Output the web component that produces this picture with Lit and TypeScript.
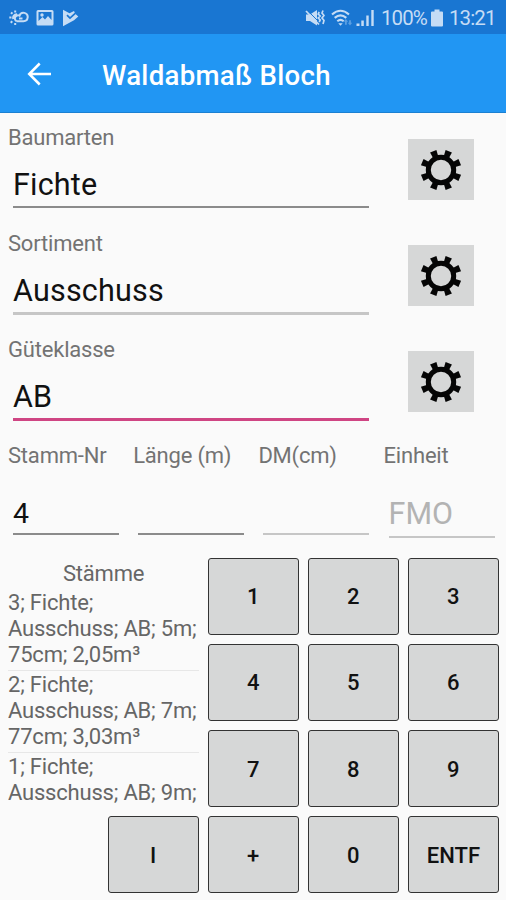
import { LitElement, html, css, svg } from "lit";
import { customElement, property } from "lit/decorators.js";
import { classMap } from "lit/directives/class-map.js";

const gearTeeth = [22.5, 67.5, 112.5, 157.5, 202.5, 247.5, 292.5, 337.5];

@customElement("status-bar")
class StatusBar extends LitElement {
  static styles = css`
    :host {
      display: flex;
      align-items: center;
      height: 34px;
      box-sizing: border-box;
      padding: 1px 10px 0 9px;
      background: #1976d2;
      color: #c5dcf5;
      font-size: 20.5px;
      line-height: 34px;
    }
    svg { display: block; flex: none; }
    .left { display: flex; align-items: center; gap: 7px; flex: 1; }
    .right { display: flex; align-items: center; }
    .wifi { margin-left: 6px; }
    .signal { margin-left: 3px; }
    .percent { margin-left: 6px; width: 45px; letter-spacing: -0.9px; white-space: nowrap; }
    .battery { margin-left: 5px; }
    .time { margin-left: 6px; width: 47px; letter-spacing: -0.9px; white-space: nowrap; }
  `;

  render() {
    return html`
      <div class="left">
        <svg width="20" height="18" viewBox="0 0 20 18" fill="none" stroke="#c5dcf5" stroke-width="2">
          <path d="M7.500 12.200H14.500a4.200 4.200 0 1 0-4-5.500A3 3 0 0 0 7.500 12.200M10 9.500h3.500M8 5.400A3.500 3.500 0 0 0 4.300 10" />
          <path d="M6.200 1.400v2M2 3.400l1.500 1.400M.3 8.500h2.200M1.700 13.700l1.600-1.500M6.200 16v-2" />
        </svg>
        <svg width="18" height="18" viewBox="0 0 18 18">
          <path fill="#c5dcf5" fill-rule="evenodd" d="M2 1h14a1.500 1.500 0 0 1 1.500 1.500V15a1.500 1.500 0 0 1-1.500 1.500H2A1.500 1.500 0 0 1 .5 15V2.500A1.500 1.500 0 0 1 2 1ZM2.500 3v9l4-4 2.500 2.500 3-3.500 3.500 4V3Z" />
          <circle cx="6" cy="6" r="1.700" fill="#c5dcf5" />
        </svg>
        <svg width="18" height="18" viewBox="0 0 18 18">
          <path fill="#c5dcf5" d="M2 .7 8.500 4.200 13 2 14.500 5 17.300 7.500 13 11.200 2 17.300Z" />
          <path d="m6 6.200 3 3 5.500-5" fill="none" stroke="#1976d2" stroke-width="1.700" />
        </svg>
      </div>
      <div class="right">
        <svg width="20" height="18" viewBox="0 0 20 18">
          <path fill="#c5dcf5" d="M1 5.500h4L12 1v15.500L5 12H1Z" />
          <path d="M2.500 1.500 14 13" stroke="#1976d2" stroke-width="1" />
          <path d="M1 2 14 15.500" stroke="#c5dcf5" stroke-width="1.800" />
          <path d="m14.200 3-1 2 2 2-2 2 2 2-1 2M18 1.500l-1 2.500 2 2.500-2 2.500 2 2.500-1 3.500" fill="none" stroke="#c5dcf5" stroke-width="1.700" />
        </svg>
        <svg class="wifi" width="22" height="18" viewBox="0 0 22 18">
          <path d="M1 5.500q8.500-7.500 17 0M3.700 8.900q5.800-5.200 11.600 0M6.300 12.200q3.200-2.800 6.400 0" fill="none" stroke="#c5dcf5" stroke-width="2.100" />
          <path d="m9.500 16.700-2.200-2.400h4.400Z" fill="#c5dcf5" />
          <path d="m14.900 10 2.200 2.700h-1.300v3h-1.800v-3h-1.300ZM19 16.500l2.200-2.700h-1.300v-2.500h-1.800v2.500h-1.300Z" fill="#5b9fe2" />
        </svg>
        <svg class="signal" width="19" height="18" viewBox="0 0 19 18" fill="#c5dcf5">
          <path d="M.5 14.500h3V17h-3ZM5.300 11.500h2.500V17H5.300ZM10.300 6.500h2.400V17h-2.400ZM15.300 1h2.400v16h-2.400Z" />
        </svg>
        <span class="percent">100%</span>
        <svg class="battery" width="12" height="18" viewBox="0 0 12 18">
          <path fill="#c5dcf5" d="M3.500.5h5v2H11a1 1 0 0 1 1 1v13a1 1 0 0 1-1 1H1a1 1 0 0 1-1-1v-13a1 1 0 0 1 1-1h2.500Z" />
        </svg>
        <span class="time">13:21</span>
      </div>
    `;
  }
}

@customElement("choice-field")
class ChoiceField extends LitElement {
  @property() label = "";
  @property() value = "";
  @property() tone = "dark";

  static styles = css`
    :host {
      display: flex;
      height: 106.200px;
      box-sizing: border-box;
      padding-left: 8px;
    }
    .text { width: 361px; flex: none; }
    .label {
      margin-top: 12px;
      height: 26px;
      line-height: 26px;
      font-size: 22px;
      letter-spacing: -0.200px;
      color: #737373;
    }
    .value {
      margin: 11px 0 0 5px;
      height: 46px;
      box-sizing: border-box;
      line-height: 46px;
      font-size: 30.500px;
      letter-spacing: 0.200px;
      color: #111;
      border-bottom: 2px solid #8b8b8b;
    }
    .light { height: 47px; border-color: #c6c6c6; border-width: 3px; }
    .active { height: 47px; border-color: #cf4583; border-width: 3px; }
    .gear {
      width: 66px;
      height: 61px;
      margin: 26px 0 0 39px;
      display: grid;
      place-items: center;
      padding: 0;
      border: 0;
      background: #d6d7d7;
    }
    svg { display: block; }
  `;

  render() {
    return html`
      <div class="text">
        <div class="label">${this.label}</div>
        <div class=${classMap({ value: true, light: this.tone === "light", active: this.tone === "active" })}>${this.value}</div>
      </div>
      <button class="gear">
        <svg width="42" height="42" viewBox="-21 -21 42 42">
          <circle r="12.700" fill="none" stroke="#050505" stroke-width="5" />
          ${gearTeeth.map((a) => svg`<path transform="rotate(${a})" d="M-2.700-13.500-3.400-20.300H3.400L2.700-13.500Z" fill="#050505" />`)}
        </svg>
      </button>
    `;
  }
}

@customElement("app-root")
class AppRoot extends LitElement {
  private columns = [
    { label: "Stamm-Nr", value: "4", tone: "" },
    { label: "Länge (m)", value: "", tone: "" },
    { label: "DM(cm)", value: "", tone: "light" },
    { label: "Einheit", value: "FMO", tone: "hint" },
  ];
  private stems = [
    ["3; Fichte;", "Ausschuss; AB; 5m;", "75cm; 2,05m³"],
    ["2; Fichte;", "Ausschuss; AB; 7m;", "77cm; 3,03m³"],
    ["1; Fichte;", "Ausschuss; AB; 9m;"],
  ];
  private keys = ["1", "2", "3", "4", "5", "6", "7", "8", "9", "I", "+", "0", "ENTF"];

  static styles = css`
    :host {
      display: flex;
      flex-direction: column;
      width: 506px;
      height: 900px;
      overflow: hidden;
      background: #fafafa;
      font-family: Roboto, "Liberation Sans", sans-serif;
    }
    .bar {
      height: 79px;
      box-sizing: border-box;
      flex: none;
      display: flex;
      align-items: center;
      padding: 4px 0 0 27px;
      background: #2196f3;
      border-bottom: 1.500px solid #1b80d2;
      color: #fff;
    }
    .bar svg { display: block; margin-bottom: 3px; }
    .title {
      margin: 1px 0 0 51px;
      font-size: 27.600px;
      font-weight: 500;
      letter-spacing: 0.300px;
      line-height: 32px;
      white-space: nowrap;
    }
    .fields { height: 318px; flex: none; }
    .entries {
      display: grid;
      grid-template-columns: repeat(4, 125.200px);
      padding-left: 8px;
      height: 126.500px;
      flex: none;
    }
    .name {
      margin-top: 12px;
      height: 26px;
      line-height: 26px;
      font-size: 22px;
      letter-spacing: -0.200px;
      color: #737373;
      white-space: nowrap;
    }
    .entry {
      margin: 20px 0 0 5px;
      width: 106px;
      height: 46px;
      box-sizing: border-box;
      line-height: 49px;
      font-size: 28.500px;
      color: #111;
      border-bottom: 2px solid #8b8b8b;
    }
    .light { border-color: #c6c6c6; }
    .hint {
      height: 49px;
      line-height: 50px;
      font-size: 30.500px;
      color: #b3b3b3;
      border-color: #c6c6c6;
    }
    .pad {
      display: grid;
      grid-template-columns: repeat(5, 91px);
      grid-template-rows: repeat(4, 77px);
      column-gap: 9.100px;
      row-gap: 9.300px;
      padding-left: 8px;
    }
    .stems {
      grid-column: 1 / 3;
      grid-row: 1 / 4;
      overflow: hidden;
      font-size: 22px;
      line-height: 26px;
      color: #666;
      letter-spacing: -0.200px;
      white-space: nowrap;
    }
    .heading { margin-top: 3px; height: 29px; text-align: center; }
    .stem { padding-bottom: 2px; margin-bottom: 1px; border-bottom: 1px solid #e7e7e7; }
    .stem:last-child { border-bottom: 0; }
    .key {
      box-sizing: border-box;
      padding: 1px 1px 0 0;
      border: 1.500px solid #333;
      border-radius: 3px;
      background: #d6d7d7;
      color: #111;
      font: 500 22px Roboto, "Liberation Sans", sans-serif;
    }
    .first { grid-column: 3; }
    .low { grid-column: 2; }
  `;

  render() {
    return html`
      <status-bar></status-bar>
      <header class="bar">
        <svg width="24" height="24" viewBox="0 0 24 24" fill="none" stroke="#fff" stroke-width="2.500">
          <path d="M24 12H3M12.700 1.500 2.200 12l10.500 10.500" />
        </svg>
        <h1 class="title">Waldabmaß Bloch</h1>
      </header>
      <div class="fields">
        <choice-field label="Baumarten" value="Fichte"></choice-field>
        <choice-field label="Sortiment" value="Ausschuss" tone="light"></choice-field>
        <choice-field label="Güteklasse" value="AB" tone="active"></choice-field>
      </div>
      <div class="entries">
        ${this.columns.map((c) => html`
          <div>
            <div class="name">${c.label}</div>
            <div class=${classMap({ entry: true, light: c.tone === "light", hint: c.tone === "hint" })}>${c.value}</div>
          </div>`)}
      </div>
      <div class="pad">
        <div class="stems">
          <div class="heading">Stämme</div>
          ${this.stems.map((s) => html`<div class="stem">${s.map((line) => html`<div>${line}</div>`)}</div>`)}
        </div>
        ${this.keys.map((k, i) => html`
          <button class=${classMap({ key: true, first: i < 9 && i % 3 === 0, low: i === 9 })}>${k}</button>`)}
      </div>
    `;
  }
}
